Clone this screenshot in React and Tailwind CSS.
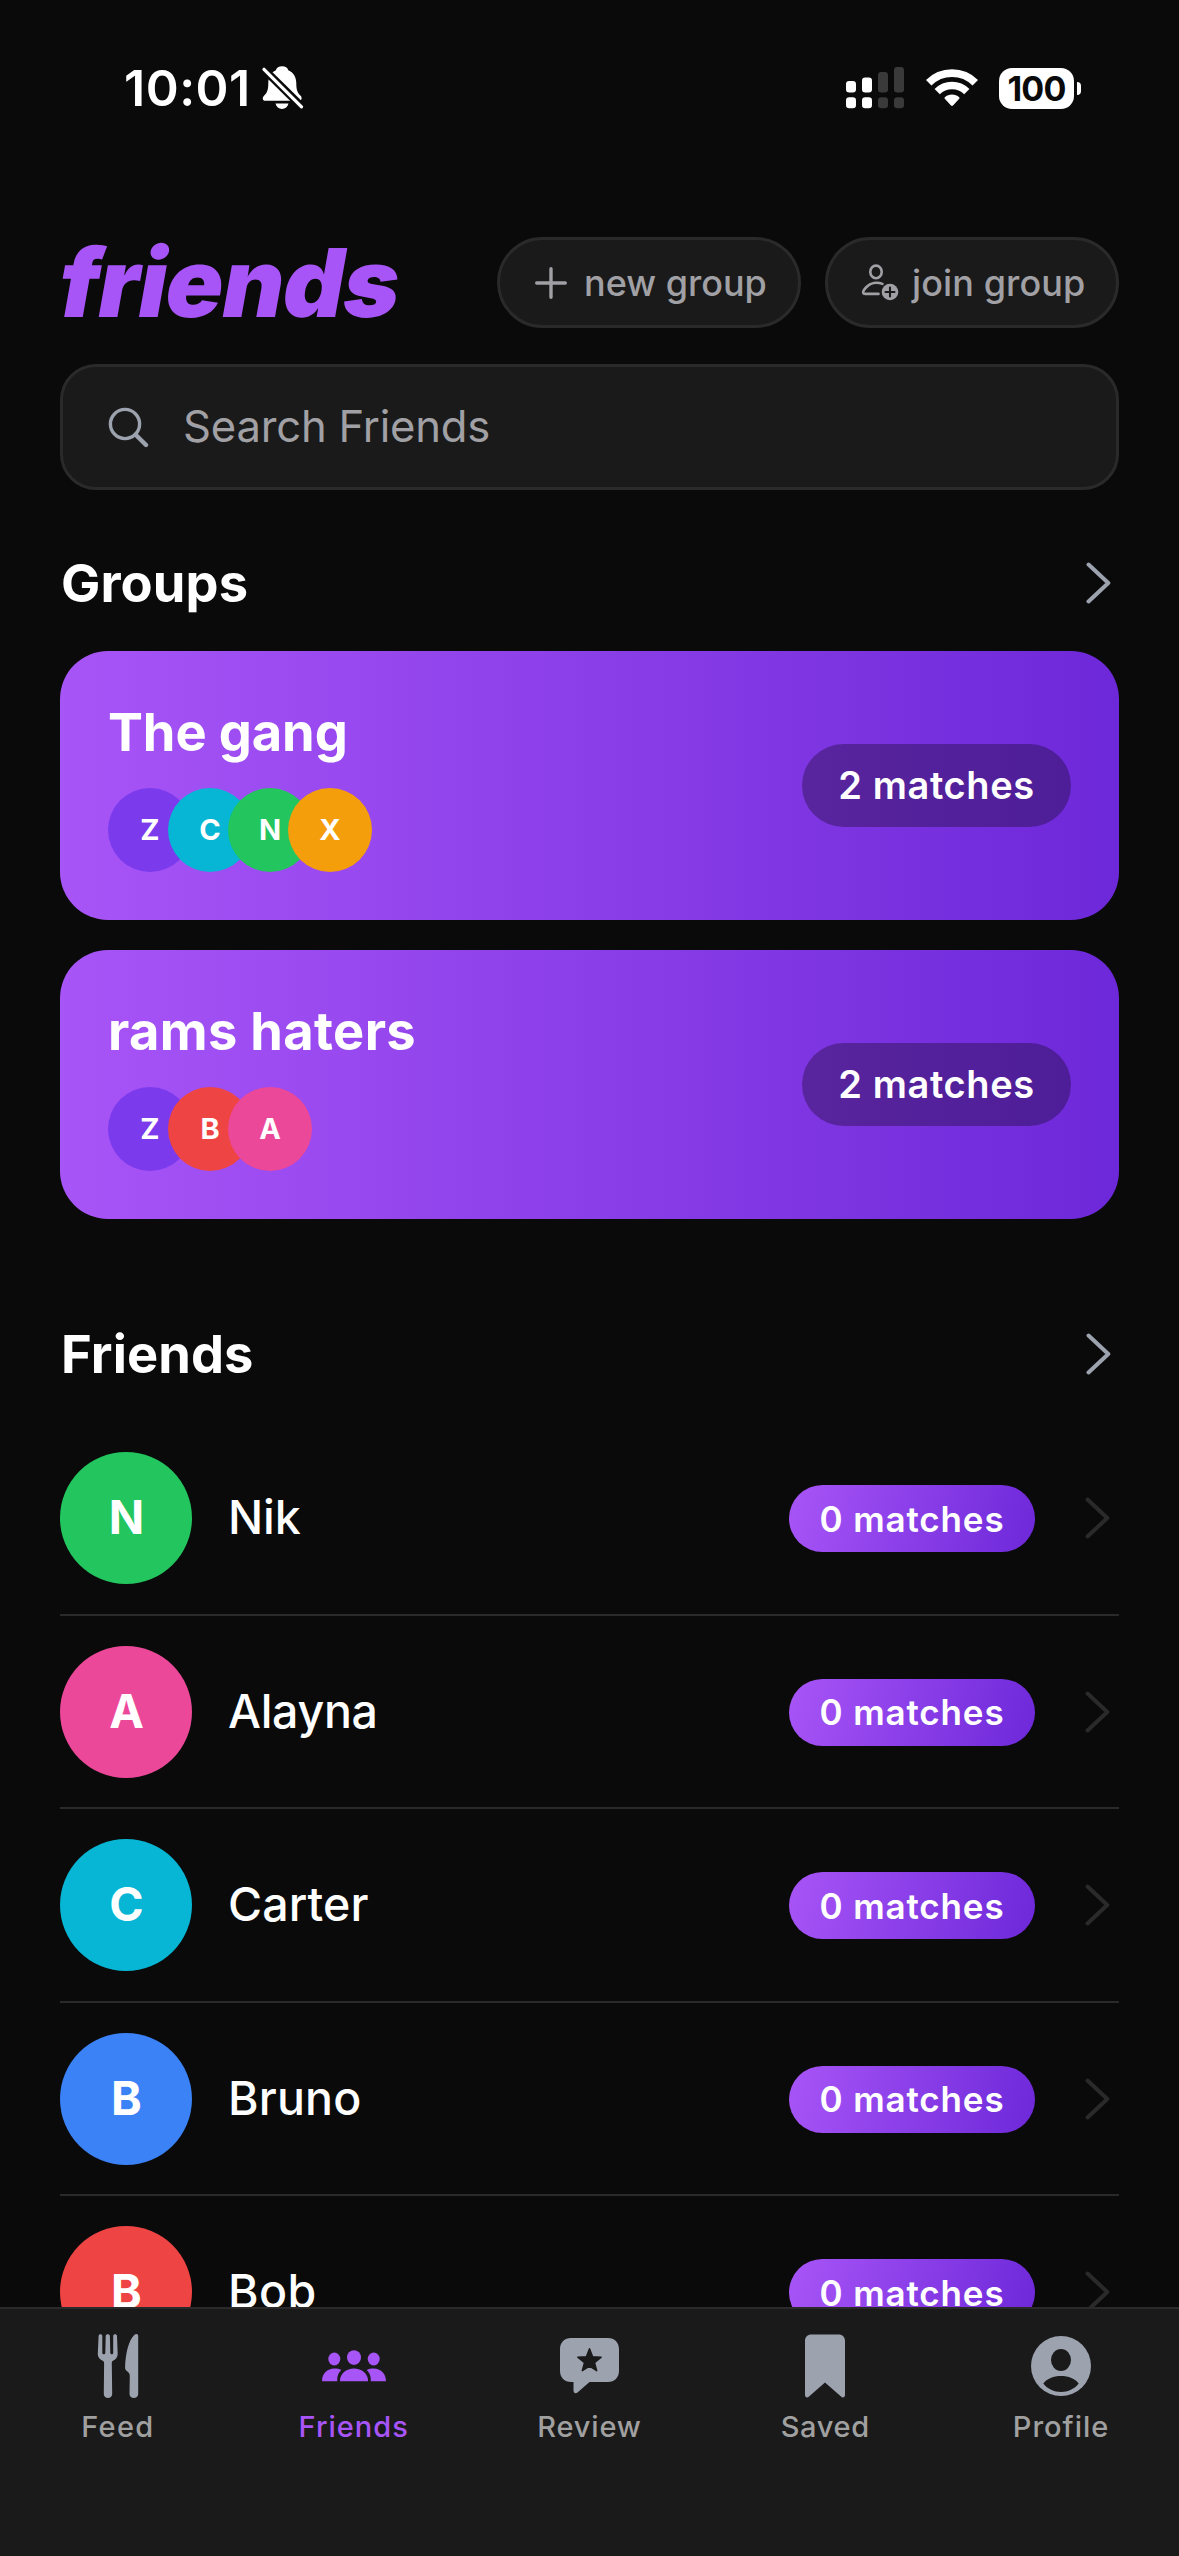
import React from "react";

const groups = [
  {
    name: "The gang",
    tracking: "tracking-[-0.1px]",
    matches: "2 matches",
    members: [
      ["Z", "bg-[#7c3aed]"],
      ["C", "bg-[#06b6d4]"],
      ["N", "bg-[#22c55e]"],
      ["X", "bg-[#f59e0b]"],
    ],
  },
  {
    name: "rams haters",
    tracking: "tracking-[0.35px]",
    matches: "2 matches",
    members: [
      ["Z", "bg-[#7c3aed]"],
      ["B", "bg-[#ef4444]"],
      ["A", "bg-[#ec4899]"],
    ],
  },
];

const friends = [
  ["Nik", "bg-[#22c55e]", "tracking-[-0.1px]"],
  ["Alayna", "bg-[#ec4899]", "tracking-[-0.3px]"],
  ["Carter", "bg-[#06b6d4]", "tracking-[0.1px]"],
  ["Bruno", "bg-[#3b82f6]", "tracking-[0.2px]"],
  ["Bob", "bg-[#ef4444]", "tracking-[0.4px]"],
];

function BellOff() {
  return (
    <svg width="42" height="46" viewBox="0 0 42 46" className="ml-[11px] shrink-0">
      <path
        fill="#fff"
        d="M20 1.2c3.4 0 5.6 1.4 6.3 4 5.2 2 8 7 8 13 0 7.500 1.500 9.800 4.300 12.600 1.800 1.800 1.200 5-1.600 5H3.200c-2.800 0-3-3.200-1.400-4.800 3.200-3.200 4.500-5.800 4.500-12.800 0-6 2.600-11 7.600-13 .7-2.600 2.900-4 6.100-4zM13.500 38.600h13c-.8 3.400-3.300 5.400-6.500 5.400s-5.700-2-6.500-5.400z"
      />
      <path d="M-1 1.500 41 43" stroke="#0a0a0a" strokeWidth="8" />
      <path d="M2 4.300 39.500 41.800" stroke="#fff" strokeWidth="3.200" strokeLinecap="round" />
    </svg>
  );
}

function Signal() {
  const bars = [
    [14, "#fff"],
    [10.5, "#fff"],
    [5, "#3a3a3a"],
    [0, "#3a3a3a"],
  ];
  return (
    <svg width="58" height="42" viewBox="0 0 58 42">
      {bars.map(([y, c], i) => (
        <g key={i} fill={c}>
          <rect x={i * 16} y={y} width="10" height={25.5 - y} rx="3.200" />
          <rect x={i * 16} y="30.300" width="10" height="11" rx="3.200" />
        </g>
      ))}
    </svg>
  );
}

function Wifi() {
  return (
    <svg width="52" height="38" viewBox="0 0 52 38" className="ml-[22px]" fill="none" stroke="#fff">
      <path d="M2.700 13.700A33 33 0 0 1 49.300 13.700" strokeWidth="7.800" />
      <path d="M11.200 22.700A20.800 20.800 0 0 1 40.800 22.700" strokeWidth="7.400" />
      <path
        d="M18.800 28.200C22.500 24.600 29.500 24.600 33.200 28.200 33.700 28.700 33.700 29.300 33.200 29.800L27 36.600C26.400 37.200 25.600 37.200 25 36.600L18.800 29.800C18.300 29.300 18.300 28.700 18.800 28.200Z"
        fill="#fff"
        stroke="none"
      />
    </svg>
  );
}

function StatusBar() {
  return (
    <div className="flex h-[176px] shrink-0 items-center pl-[124px] pr-[98px] text-white">
      <span className="text-[50px] leading-none font-semibold tracking-[0.5px]">10:01</span>
      <BellOff />
      <div className="ml-auto flex items-center">
        <Signal />
        <Wifi />
        <div className="ml-[21px] flex h-[41px] w-[75px] items-center justify-center rounded-[13px] bg-white pt-px text-[34px] leading-none font-bold tracking-[-0.8px] text-[#0a0a0a]">
          100
        </div>
        <div className="ml-[3px] h-[13px] w-[4px] rounded-r-full bg-white" />
      </div>
    </div>
  );
}

function Chevron({ className }) {
  return (
    <svg width="25" height="42" viewBox="0 0 25 42" fill="none" className={className}>
      <path
        d="M2.500 2.500 22.300 21 2.500 39.500"
        stroke="currentColor"
        strokeWidth="4"
        strokeLinecap="round"
        strokeLinejoin="round"
      />
    </svg>
  );
}

function Header() {
  return (
    <div className="mt-[61px] flex h-[91px] items-center">
      <h1 className="ml-px inline-block origin-center -skew-x-[10deg] text-[95px] leading-none font-black tracking-[-1px] text-[#a855f7]">
        friends
      </h1>
      <div className="ml-auto flex gap-[24px] text-[36px] font-medium text-[#a0a0a5]">
        <button className="flex h-[91px] w-[304px] items-center rounded-full border-[3px] border-[#2a2a2a] bg-[#1a1a1a] pl-[35px]">
          <svg width="32" height="32" viewBox="0 0 32 32" className="mt-px mr-[17px] shrink-0">
            <path d="M16 1.700V30.300M1.700 16H30.300" stroke="currentColor" strokeWidth="3.400" strokeLinecap="round" />
          </svg>
          <span className="whitespace-nowrap">new group</span>
        </button>
        <button className="flex h-[91px] w-[294px] items-center rounded-full border-[3px] border-[#2a2a2a] bg-[#1a1a1a] pl-[33px]">
          <svg width="38" height="38" viewBox="0 0 38 38" fill="none" className="mr-[13px] shrink-0">
            <g stroke="currentColor" strokeWidth="2.600" strokeLinecap="round">
              <ellipse cx="15" cy="7.900" rx="5.700" ry="6.300" />
              <path d="M21.500 19.900C16 17.900 9.500 18.700 5.500 23 3.300 25.300 2 27.700 2.200 28.700 2.400 29.700 3.200 29.900 4.300 29.900H17.500" />
            </g>
            <circle cx="29" cy="28" r="8.300" fill="currentColor" />
            <path d="M29 23.500V32.500M24.500 28H33.500" stroke="#1a1a1a" strokeWidth="2.100" strokeLinecap="round" />
          </svg>
          <span className="tracking-[0.1px] whitespace-nowrap">join group</span>
        </button>
      </div>
    </div>
  );
}

function Search() {
  return (
    <div className="mt-[36px] flex h-[126px] items-center rounded-[36px] border-[3px] border-[#2a2a2a] bg-[#1a1a1a] pl-[44px] text-[#a0a0a5]">
      <svg width="42" height="42" viewBox="0 0 42 42" fill="none" stroke="#9ca3af" className="mt-[2px] mr-[34px]">
        <circle cx="18" cy="17" r="14.600" strokeWidth="3.400" />
        <path d="M28.700 27.700 39 38" strokeWidth="4.400" strokeLinecap="round" />
      </svg>
      <span className="text-[43.600px] tracking-[-0.2px]">Search Friends</span>
    </div>
  );
}

function SectionHeader({ title, className }) {
  return (
    <div className={"flex h-[60px] items-center justify-between pr-[8px] pl-px " + className}>
      <h2 className="text-[52.400px] leading-none font-bold tracking-[0.1px] text-white">{title}</h2>
      <Chevron className="text-[#9ca3af]" />
    </div>
  );
}

function GroupCard({ group }) {
  return (
    <div className="flex h-[269px] items-center justify-between rounded-[48px] bg-linear-[90deg,#a855f7,#6d28d9] px-[48px]">
      <div className="flex flex-col gap-[23px]">
        <div className={"text-[52.400px] leading-[66px] font-bold text-white " + group.tracking}>{group.name}</div>
        <div className="flex">
          {group.members.map(([letter, color]) => (
            <div
              key={letter}
              className={
                "-mr-[24px] flex size-[84px] items-center justify-center rounded-full text-[29px] font-bold text-white " +
                color
              }
            >
              {letter}
            </div>
          ))}
        </div>
      </div>
      <div className="flex h-[83px] w-[269px] items-center justify-center rounded-full bg-black/30 text-[38px] font-semibold tracking-[0.6px] text-white">
        {group.matches}
      </div>
    </div>
  );
}

function FriendRow({ name, color, tracking }) {
  return (
    <div className="flex h-[193.500px] shrink-0 items-center border-b-2 border-[#2a2a2a] pt-px pr-[8px]">
      <div
        className={
          "flex size-[132px] items-center justify-center rounded-full pl-px text-[46.500px] font-bold text-white " +
          color
        }
      >
        {name[0]}
      </div>
      <span className={"ml-[36px] text-[46.500px] font-medium text-white " + tracking}>{name}</span>
      <div className="mt-px ml-auto flex h-[67px] w-[246px] items-center justify-center rounded-full bg-linear-[105deg,#a855f7,#6d28d9] text-[35px] font-semibold tracking-[0.85px] text-white">
        0 matches
      </div>
      <Chevron className="mr-px ml-[50px] text-[#2a2a2a]" />
    </div>
  );
}

const FeedIcon = (
  <svg width="42" height="64" viewBox="0 0 42 64" fill="currentColor">
    <path d="M1.600 2C1.700-.5 5.300-.5 5.300 2V19C5.300 20.800 8.200 20.800 8.300 19L8.700 2C8.800-.5 12.800-.5 12.900 2L13.300 19C13.400 20.800 16.200 20.800 16.200 19V2C16.200-.5 19.900-.5 20 2L20.700 20C20.700 23.500 18.500 25.500 16 26.700 15 27.200 14.700 28 14.800 29.500L15.200 60C15.200 65.200 6.800 65.200 6.800 60L7.100 29.500C7.100 28 6.800 27.200 5.800 26.700 3.200 25.500.800 23.500.800 20Z" />
    <path d="M37.500.800C39.500-.700 41.200 0 41.200 2.300V60C41.200 65.300 32.500 65.300 32.500 60L32.800 42C32.800 39.500 31.500 38.300 29.800 37 28.500 36 28 35 28.100 33 28.500 20 31.500 6.500 37.500.800Z" />
  </svg>
);

const FriendsIcon = (
  <svg width="64" height="32" viewBox="0 0 64 32" fill="currentColor">
    <ellipse cx="12.300" cy="9" rx="6" ry="6.500" />
    <ellipse cx="32" cy="7.600" rx="7" ry="7.400" />
    <ellipse cx="51.700" cy="9" rx="6" ry="6.500" />
    <path d="M18 31.300C17.500 24 24.500 18.600 32 18.600S46.500 24 46 31.300Z" />
    <path d="M.1 31.300C-.4 24.500 5 18.600 12.300 18.600 15 18.600 17.300 19 19.300 20 16.300 23 14.800 26.500 15.300 31.300Z" />
    <path d="M63.900 31.300C64.400 24.500 59 18.600 51.700 18.600 49 18.600 46.700 19 44.700 20 47.700 23 49.200 26.500 48.700 31.300Z" />
  </svg>
);

const ReviewIcon = (
  <svg width="59" height="56" viewBox="0 0 59 56">
    <path
      fill="currentColor"
      d="M11 0H48C54.500 0 59 4.500 59 11V33C59 39.500 54.500 44 48 44H29.500L17.500 54.400C15.500 56 13.500 55 13.500 52.600V44H11C4.500 44 0 39.500 0 33V11C0 4.500 4.500 0 11 0Z"
    />
    <path
      fill="#1a1a1a"
      stroke="#1a1a1a"
      strokeWidth="1.500"
      strokeLinejoin="round"
      d="M29.500 10.700 32.600 18.700 41.200 19.200 34.500 24.600 36.700 32.700 29.500 28.100 22.300 32.700 24.500 24.600 17.800 19.200 26.400 18.700Z"
    />
  </svg>
);

const SavedIcon = (
  <svg width="40" height="64" viewBox="0 0 40 64">
    <path
      fill="currentColor"
      d="M6.500.500H33.500C37.500.500 40 3 40 7V61C40 63.500 37.800 64.300 36 62.600L20 48.500 4 62.600C2.200 64.300 0 63.500 0 61V7C0 3 2.500.500 6.500.500Z"
    />
  </svg>
);

const ProfileIcon = (
  <svg width="60" height="60" viewBox="0 0 60 60">
    <circle cx="30" cy="30" r="30" fill="currentColor" />
    <ellipse cx="30" cy="24" rx="10" ry="11" fill="#1a1a1a" />
    <path
      fill="#1a1a1a"
      d="M12.300 47.500C16 42.500 22.500 40 30 40S44 42.500 47.700 47.500C43.500 53 37 56 30 56S16.500 53 12.300 47.500Z"
    />
  </svg>
);

const tabs = [
  { label: "Feed", icon: FeedIcon, tracking: "tracking-[1.300px]" },
  { label: "Friends", icon: FriendsIcon, tracking: "tracking-[1px]", active: true },
  { label: "Review", icon: ReviewIcon, tracking: "tracking-[0.800px]" },
  { label: "Saved", icon: SavedIcon, tracking: "tracking-[0.700px]" },
  { label: "Profile", icon: ProfileIcon, tracking: "tracking-[1px]" },
];

function TabBar() {
  return (
    <nav className="grid h-[249px] shrink-0 grid-cols-5 border-t-2 border-[#2a2a2a] bg-[#1a1a1a] pt-[25px]">
      {tabs.map((t) => (
        <div key={t.label} className="flex flex-col items-center">
          <div className={"flex h-[64px] items-center " + (t.active ? "text-[#a855f7]" : "text-[#9ca3af]")}>
            {t.icon}
          </div>
          <span
            className={
              "mt-[9px] text-[29px] leading-[40px] font-medium " +
              t.tracking +
              (t.active ? " text-[#a855f7]" : " text-[#a0a0a0]")
            }
          >
            {t.label}
          </span>
        </div>
      ))}
    </nav>
  );
}

export default function App() {
  return (
    <div className="flex h-[2556px] w-[1179px] flex-col overflow-hidden bg-[#0a0a0a] font-['Inter',sans-serif]">
      <main className="flex h-[2307px] shrink-0 flex-col overflow-hidden">
        <StatusBar />
        <div className="flex shrink-0 flex-col px-[60px]">
          <Header />
          <Search />
          <SectionHeader title="Groups" className="mt-[63px]" />
          <div className="mt-[38px] flex flex-col gap-[30px]">
            {groups.map((g) => (
              <GroupCard key={g.name} group={g} />
            ))}
          </div>
          <SectionHeader title="Friends" className="mt-[105px]" />
          <div className="mt-[38px] flex flex-col">
            {friends.map(([name, color, tracking]) => (
              <FriendRow key={name} name={name} color={color} tracking={tracking} />
            ))}
          </div>
        </div>
      </main>
      <TabBar />
    </div>
  );
}
